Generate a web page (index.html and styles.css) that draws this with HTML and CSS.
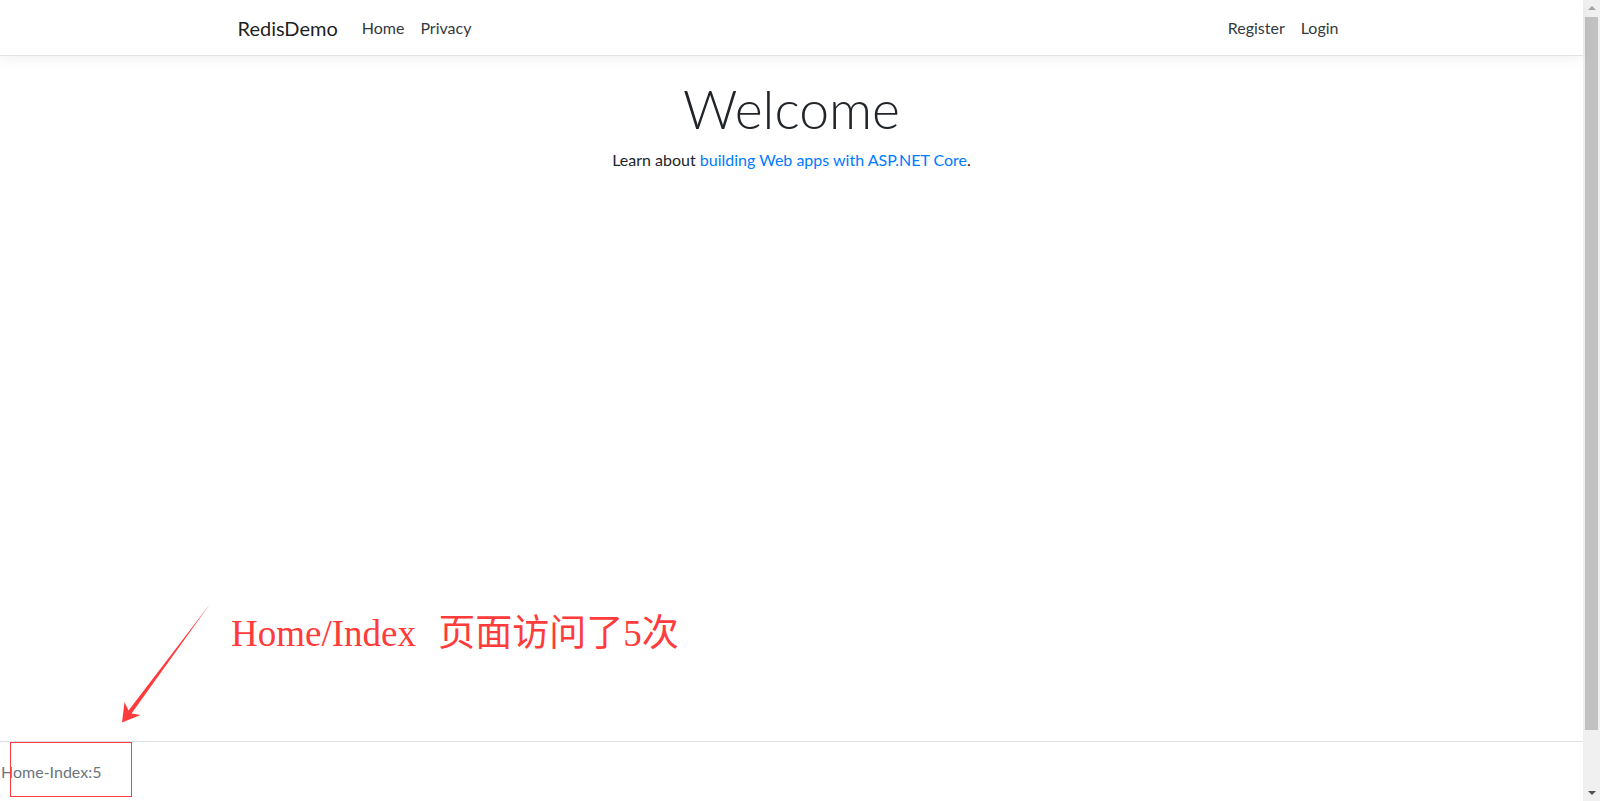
FILE: index.html
```html
<!DOCTYPE html>
<html lang="zh">
<head>
<meta charset="utf-8">
<title>Home Page - RedisDemo</title>
<link rel="stylesheet" href="styles.css">
</head>
<body>
<div class="screen">
  <div class="page">
    <header class="navbar">
      <div class="container nav-inner">
        <a class="brand">RedisDemo</a>
        <ul class="nav">
          <li class="nav-link">Home</li>
          <li class="nav-link">Privacy</li>
        </ul>
        <ul class="nav nav-right">
          <li class="nav-link">Register</li>
          <li class="nav-link">Login</li>
        </ul>
      </div>
    </header>
    <main class="container main">
      <div class="hero">
        <h1 class="display">Welcome</h1>
        <p class="lead-text">Learn about <a class="link">building Web apps with ASP.NET Core</a>.</p>
      </div>
    </main>
    <footer class="footer">Home-Index:5</footer>

    <div class="annot-text">Home/Index 页面访问了5次</div>
    <svg class="annot-arrow" width="1583" height="801" viewBox="0 0 1583 801">
      <polygon points="210,604 131.5,713.5 140.5,715 122,722.5 124.5,702 128.5,710.5" fill="#ff3b3b"/>
    </svg>
    <div class="annot-box"></div>
  </div>
  <div class="scrollbar">
    <div class="sb-up"></div>
    <div class="sb-track"><div class="sb-thumb"></div></div>
    <div class="sb-down"></div>
  </div>
</div>
</body>
</html>
```
FILE: styles.css
```css
html, body {
  margin: 0;
  padding: 0;
  height: 100%;
  overflow: hidden;
  background: #fff;
}
body {
  font-family: Lato, "Open Sans", "Liberation Sans", sans-serif;
  font-size: 16px;
  color: #212529;
}
.screen {
  display: flex;
  width: 1600px;
  height: 801px;
}
.page {
  position: relative;
  width: 1583px;
  height: 801px;
  display: flex;
  flex-direction: column;
}
.container {
  box-sizing: border-box;
  width: 1140px;
  margin: 0 auto;
  padding: 0 15px;
}
.navbar {
  height: 55px;
  border-bottom: 1px solid #e3e3e3;
  box-shadow: 0 4px 12px rgba(0,0,0,.05);
  background: #fff;
  flex: none;
}
.nav-inner {
  height: 55px;
  display: flex;
  align-items: center;
}
.brand {
  font-size: 20px;
  color: rgba(0,0,0,.9);
  margin-right: 16px;
  padding-left: 1px;
}
.nav {
  list-style: none;
  margin: 0;
  padding: 0;
  display: flex;
  align-items: center;
}
.nav-right {
  margin-left: auto;
}
.nav-link {
  padding: 0 8px;
  color: #343a40;
  font-size: 16px;
}
.main {
  flex: 1;
  padding-top: 20px;
}
.hero {
  text-align: center;
}
.display {
  margin: 0 0 8px;
  font-size: 53.5px;
  font-weight: 300;
  line-height: 1.2;
  color: #212529;
}
.lead-text {
  margin: 0;
  font-size: 16px;
  line-height: 24px;
}
.link {
  color: #007bff;
}
.footer {
  flex: none;
  height: 59px;
  border-top: 1px solid #dee2e6;
  line-height: 59px;
  color: #6c757d;
  font-size: 16px;
  white-space: nowrap;
  padding-left: 1px;
}
.annot-text {
  position: absolute;
  left: 231px;
  top: 610px;
  font-family: "Liberation Serif", "Noto Sans CJK SC", serif;
  font-size: 37px;
  line-height: 48px;
  word-spacing: 13px;
  color: #ff3b3b;
  white-space: nowrap;
}
.annot-arrow {
  position: absolute;
  left: 0;
  top: 0;
  pointer-events: none;
}
.annot-box {
  position: absolute;
  left: 10px;
  top: 742px;
  width: 120px;
  height: 53px;
  border: 1px solid #ff3b3b;
}
.scrollbar {
  width: 17px;
  height: 801px;
  background: #f0f0f0;
  display: flex;
  flex-direction: column;
  align-items: center;
}
.sb-up, .sb-down {
  height: 17px;
  width: 17px;
  position: relative;
  flex: none;
}
.sb-up::after {
  content: "";
  position: absolute;
  left: 5px;
  top: 6px;
  border-left: 4px solid transparent;
  border-right: 4px solid transparent;
  border-bottom: 4px solid #a3a3a3;
}
.sb-down::after {
  content: "";
  position: absolute;
  left: 5px;
  top: 7px;
  border-left: 4px solid transparent;
  border-right: 4px solid transparent;
  border-top: 4px solid #505050;
}
.sb-track {
  flex: 1;
  width: 17px;
  display: flex;
  justify-content: center;
}
.sb-thumb {
  width: 13px;
  height: 713px;
  background: #c1c1c1;
}
```
